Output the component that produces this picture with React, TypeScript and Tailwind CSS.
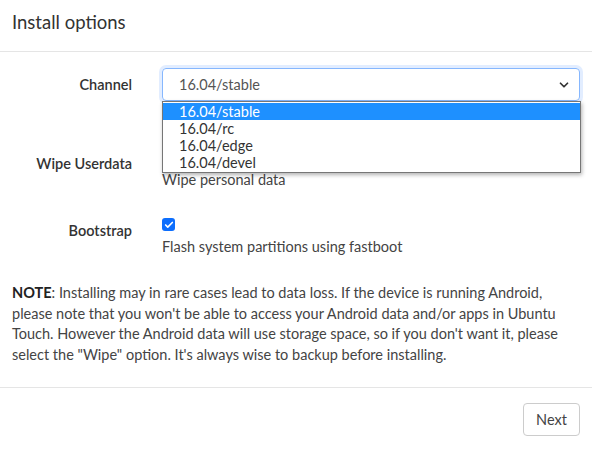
import { Check, ChevronDown } from 'lucide-react';

const options = ['16.04/stable', '16.04/rc', '16.04/edge', '16.04/devel'];

const CheckRow = ({ label, text, checked }: { label: string; text: string; checked: boolean }) => (
  <div className="flex items-start">
    <div className="w-[120px] pt-[3px] text-right leading-[20px] font-semibold text-[#333]">{label}</div>
    <div className="ml-[30px] flex flex-col">
      {checked ? (
        <div className="w-[13px] h-[13px] rounded-[3px] bg-[#0d6efd] flex items-center justify-center">
          <Check size={10} strokeWidth={4} className="text-white" />
        </div>
      ) : (
        <div className="w-[13px] h-[13px] rounded-[3px] border border-[#999] bg-white" />
      )}
      <div className="mt-[6px] leading-[20px] text-[#444]">{text}</div>
    </div>
  </div>
);

const InstallOptions = () => {
  return (
    <div className="w-[592px] h-[449px] bg-white text-[#333] text-[14.5px] font-['Lato',sans-serif] flex flex-col">
      <div className="h-[52px] px-3 pt-[12px] border-b border-[#e5e5e5]">
        <h2 className="text-[18.5px] leading-[20px] text-[#333]">Install options</h2>
      </div>

      <div className="px-3 pt-4 flex-1">
        {/* Channel */}
        <div className="flex items-center h-[33px]">
          <div className="w-[120px] text-right font-semibold text-[#333]">Channel</div>
          <div className="relative ml-[30px] flex-1">
            <div className="h-[33px] rounded-[4px] border border-[#86b7fe] shadow-[0_0_0_3px_rgba(13,110,253,0.12)] flex items-center justify-between pl-4 pr-2">
              <span className="text-[#555]">16.04/stable</span>
              <ChevronDown size={14} strokeWidth={3} className="text-[#333]" />
            </div>
            {/* open list */}
            <div className="absolute left-0 right-[-1px] top-[33px] z-10 bg-white border border-[#767676] shadow-[1px_2px_4px_rgba(0,0,0,0.3)] py-[1px]">
              {options.map((opt, i) => (
                <div
                  key={opt}
                  className={
                    i === 0
                      ? 'h-[17px] leading-[17px] pl-4 bg-[#1e90ff] text-white'
                      : 'h-[17px] leading-[17px] pl-4 text-[#333]'
                  }
                >
                  {opt}
                </div>
              ))}
            </div>
          </div>
        </div>

        <div className="mt-[50px]">
          <CheckRow label="Wipe Userdata" text="Wipe personal data" checked={false} />
        </div>
        <div className="mt-[28px]">
          <CheckRow label="Bootstrap" text="Flash system partitions using fastboot" checked={true} />
        </div>

        <p className="mt-[26px] leading-[20.5px] text-[#444]">
          <span className="font-bold text-[#222]">NOTE</span>: Installing may in rare cases lead to data loss. If the device is running Android, please note that you won't be able to access your Android data and/or apps in Ubuntu Touch. However the Android data will use storage space, so if you don't want it, please select the "Wipe" option. It's always wise to backup before installing.
        </p>
      </div>

      <div className="h-[62px] border-t border-[#e5e5e5] flex items-start justify-end px-3 pt-[15px]">
        <button className="h-[33px] w-[57px] rounded-[4px] border border-[#ccc] text-[#444] bg-white">Next</button>
      </div>
    </div>
  );
};

export default function App() {
  return <InstallOptions />;
}
